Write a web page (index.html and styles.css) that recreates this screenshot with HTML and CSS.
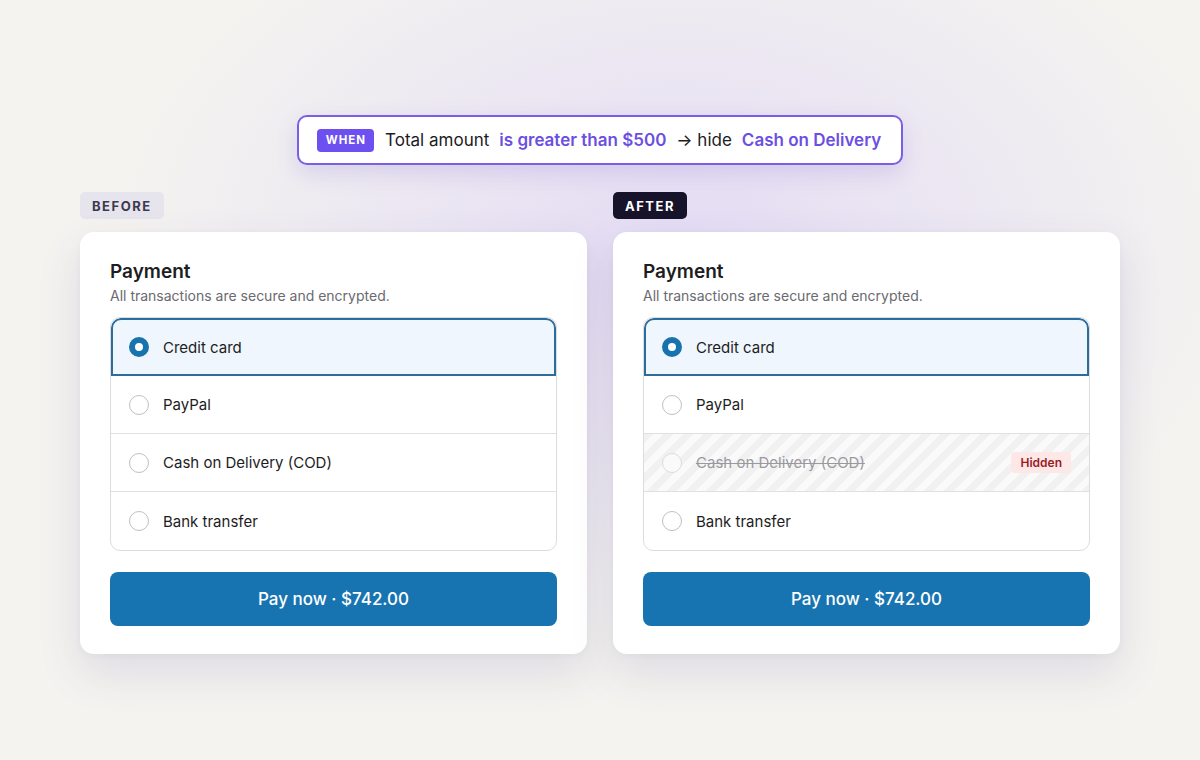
FILE: index.html
```html
<!DOCTYPE html>
<html lang="en">
<head>
  <meta charset="UTF-8">
  <meta name="viewport" content="width=device-width, initial-scale=1.0">
  <title>Hide payment method rule</title>
  <link rel="stylesheet" href="styles.css">
</head>
<body>

  <div class="rule">
    <span class="rule-when">WHEN</span>
    <span>Total amount</span>
    <span class="rule-accent">is greater than $500</span>
    <span>&rarr; hide</span>
    <span class="rule-accent">Cash on Delivery</span>
  </div>

  <div class="compare">

    <!-- before -->
    <div class="column">
      <span class="tag tag-before">BEFORE</span>
      <div class="card">
        <h2 class="card-title">Payment</h2>
        <p class="card-sub">All transactions are secure and encrypted.</p>
        <ul class="options">
          <li class="option selected"><span class="radio"></span>Credit card</li>
          <li class="option"><span class="radio"></span>PayPal</li>
          <li class="option"><span class="radio"></span>Cash on Delivery (COD)</li>
          <li class="option"><span class="radio"></span>Bank transfer</li>
        </ul>
        <button class="pay">Pay now &middot; $742.00</button>
      </div>
    </div>

    <!-- after -->
    <div class="column">
      <span class="tag tag-after">AFTER</span>
      <div class="card">
        <h2 class="card-title">Payment</h2>
        <p class="card-sub">All transactions are secure and encrypted.</p>
        <ul class="options">
          <li class="option selected"><span class="radio"></span>Credit card</li>
          <li class="option"><span class="radio"></span>PayPal</li>
          <li class="option hidden"><span class="radio"></span><s>Cash on Delivery (COD)</s><span class="badge">Hidden</span></li>
          <li class="option"><span class="radio"></span>Bank transfer</li>
        </ul>
        <button class="pay">Pay now &middot; $742.00</button>
      </div>
    </div>

  </div>

</body>
</html>
```

FILE: styles.css
```css
* {
  margin: 0;
  padding: 0;
  box-sizing: border-box;
}

body {
  width: 1200px;
  height: 760px;
  overflow: hidden;
  font-family: Inter, "Noto Sans", sans-serif;
  color: #1d1d22;
  background-color: #f4f3f0;
  background-image: radial-gradient(ellipse 560px 380px at 680px 250px, rgba(214, 200, 248, 0.55), rgba(214, 200, 248, 0) 100%);
  display: flex;
  flex-direction: column;
  align-items: center;
  padding-top: 115px;
}

/* rule pill */
.rule {
  display: flex;
  align-items: center;
  gap: 10px;
  height: 50px;
  padding: 0 20px 0 18px;
  background: #fff;
  border: 2px solid #7b5ee6;
  border-radius: 10px;
  box-shadow: 0 8px 22px rgba(95, 75, 190, 0.16);
  font-size: 17px;
  color: #1c1b24;
}

.rule-when {
  background: #6e4ff0;
  color: #fff;
  font-size: 11.5px;
  font-weight: 700;
  letter-spacing: 1px;
  height: 23px;
  line-height: 23px;
  padding: 0 8px 0 9px;
  border-radius: 4px;
  margin-right: 1px;
}

.rule-accent {
  color: #6c4fe2;
  font-weight: 600;
}

/* columns */
.compare {
  display: flex;
  gap: 26px;
  margin-top: 27px;
}

.column {
  width: 507px;
  display: flex;
  flex-direction: column;
  align-items: flex-start;
  gap: 13px;
}

.tag {
  height: 27px;
  line-height: 28px;
  padding: 0 12px 0 12px;
  border-radius: 5px;
  font-size: 13px;
  font-weight: 700;
  letter-spacing: 1.5px;
}

.tag-before {
  background: #e6e4ec;
  color: #3c394d;
}

.tag-after {
  background: #16132b;
  color: #fff;
}

/* card */
.card {
  width: 100%;
  background: #fff;
  border-radius: 14px;
  padding: 28px 30px 28px;
  box-shadow: 0 18px 44px rgba(70, 60, 120, 0.13), 0 2px 6px rgba(70, 60, 120, 0.04);
}

.card-title {
  font-size: 19px;
  font-weight: 600;
  line-height: 24px;
  color: #1d1d22;
}

.card-sub {
  font-size: 14px;
  line-height: 18px;
  color: #6a6a70;
  margin-top: 3px;
}

.options {
  list-style: none;
  margin-top: 12px;
  border: 1px solid #dcdcdf;
  border-radius: 10px;
  overflow: hidden;
}

.option {
  display: flex;
  align-items: center;
  height: 58px;
  padding: 0 18px;
  font-size: 15px;
  color: #1d1d22;
  border-bottom: 1px solid #e0e0e3;
}

.option:last-child {
  border-bottom: none;
}

.radio {
  width: 20px;
  height: 20px;
  border-radius: 50%;
  border: 1px solid #bfbfc4;
  background: #fff;
  margin-right: 14px;
  flex-shrink: 0;
}

.option.selected {
  background: #eff6fd;
  box-shadow: inset 0 0 0 2px #2b6e9d;
  border-radius: 10px 10px 0 0;
  border-bottom: none;
}

.option.selected .radio {
  border: 6px solid #1872ad;
}

.option.hidden {
  background: repeating-linear-gradient(135deg, #f1f1f2 0 7px, #fafafa 7px 14px);
  color: #9a9a9e;
}

.option.hidden .radio {
  border-color: #dcdcdf;
  background: #fafafa;
}

.option.hidden s {
  text-decoration-thickness: 1px;
}

.badge {
  margin-left: auto;
  background: #fde7e7;
  color: #9a1c1f;
  font-size: 12px;
  font-weight: 600;
  height: 21px;
  line-height: 21px;
  padding: 0 9px;
  border-radius: 4px;
}

.pay {
  display: block;
  width: 100%;
  height: 54px;
  margin-top: 21px;
  border: none;
  border-radius: 8px;
  background: #1874b0;
  color: #fff;
  font-family: inherit;
  font-size: 17px;
  font-weight: 500;
}
```
